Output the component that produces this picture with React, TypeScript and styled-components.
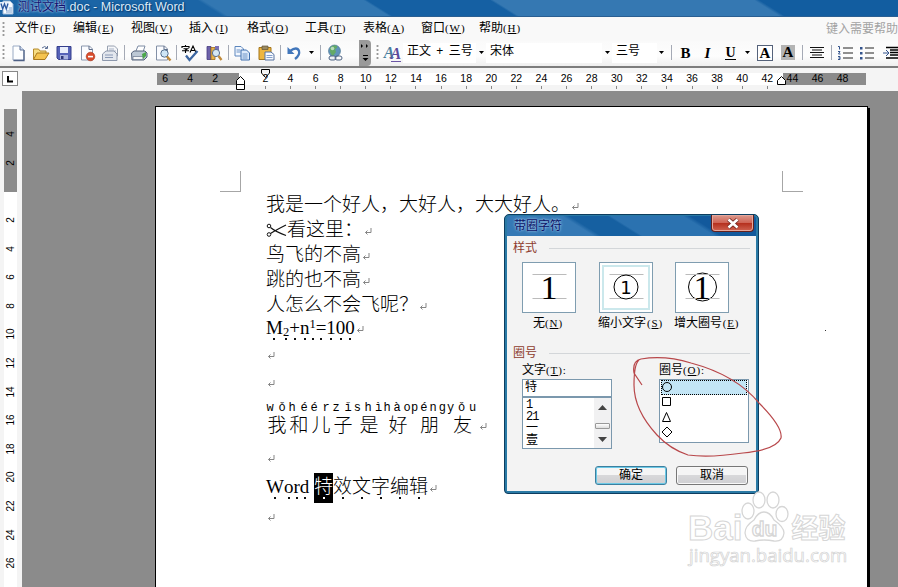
import React from 'react';
import styled, { createGlobalStyle, css } from 'styled-components';

const SANS = '"Liberation Sans", "Noto Sans CJK SC", sans-serif';
const SERIF = '"Liberation Serif", "Noto Sans CJK SC", serif';
const MONO = '"Liberation Mono", "Noto Sans CJK SC", monospace';

const Global = createGlobalStyle`
  *, *::before, *::after { box-sizing: border-box; }
  body { margin: 0; overflow: hidden; background: #f4f4f4; }
`;

const Window = styled.div`
  position: relative;
  width: 898px;
  height: 587px;
  overflow: hidden;
  display: flex;
  flex-direction: column;
  font: 12px/16px ${SANS};
  color: #000;
`;

/* ---------- title bar and menu ---------- */

const TitleBar = styled.header`
  flex: none;
  height: 17px;
  display: flex;
  align-items: center;
  border-bottom: 1px solid #2a5f92;
  background: linear-gradient(32deg, #1b65a6 0 118px, #3277b2 121px 206px, #1560a3 208px 273px, #3578b2 275px 413px, #125da0 416px);
`;

const AppIcon = styled.svg`
  width: 14px;
  height: 17px;
  margin-right: 4px;
`;

const TitleText = styled.span`
  height: 17px;
  line-height: 15px;
  font-size: 12.5px;
  white-space: pre;
  color: #dcebf8;
  text-shadow: 0 0 2px #0b3f77, 1px 1px 1px #0b3f77;
`;

const TitleName = styled.span`
  color: #11116f;
  font-size: 12px;
  text-shadow: 0 0 2px #a9cdec, 0 0 3px #a9cdec;
`;

const MenuBar = styled.nav`
  flex: none;
  height: 24px;
  display: flex;
  align-items: center;
  background: #f9f9f9;
`;

const Grip = styled.div<{ $w: number }>`
  flex: none;
  width: ${p => p.$w}px;
  height: 15px;
  background: radial-gradient(circle at 3.5px 1px, #999 1px, transparent 1.2px) 0 0 / ${p => p.$w}px 4px repeat-y;
`;

const MenuItem = styled.div`
  flex: none;
  width: 58px;
  white-space: nowrap;
  height: 20px;
  line-height: 19px;
`;

const HelpHint = styled.div`
  margin-left: auto;
  flex: none;
  width: 72px;
  white-space: nowrap;
  line-height: 16px;
  color: #a3a3a3;
`;

const Paren = styled.span`
  display: inline-block;
  min-width: 18px;
  text-align: center;
  font: 11px/14px ${SERIF};
  letter-spacing: .9px;
  vertical-align: .5px;
`;

const Key = ({ k, after = '' }: { k: string; after?: string }) => (
  <Paren>(<u>{k}</u>){after}</Paren>
);

/* ---------- toolbar ---------- */

const ToolBar = styled.div`
  flex: none;
  height: 27px;
  display: flex;
  align-items: center;
  padding-bottom: 2px;
  background: linear-gradient(#fafafa, #fdfdfd 60%, #efefef);
  border-bottom: 2px solid #7d7d7d;
`;

const Slot = styled.div<{ $w: number }>`
  flex: none;
  width: ${p => p.$w}px;
  height: 18px;
  display: flex;
  align-items: center;
  justify-content: center;
  svg { flex: none; display: block; }
`;

const Sep = styled.div<{ $w: number }>`
  flex: none;
  width: ${p => p.$w}px;
  height: 15px;
  background: linear-gradient(#a5aab5, #a5aab5) center / 1px 100% no-repeat;
`;

const Field = styled.div<{ $w: number }>`
  flex: none;
  width: ${p => p.$w}px;
  padding-left: 4px;
  white-space: nowrap;
  word-spacing: 2px;
  height: 20px;
  line-height: 17px;
  background: #fff;
`;

const Overflow = styled.div`
  flex: none;
  width: 12px;
  height: 26px;
  margin: 0 3px 0 12px;
  border-radius: 0 4px 4px 0;
  background: #9a9a9a;
`;

const Format = styled.span<{ $kind: 'b' | 'i' | 'u' | 'box' | 'shade' }>`
  font: bold 15px/16px ${SERIF};
  ${p => p.$kind === 'i' && css`font-style: italic;`}
  ${p => p.$kind === 'u' && css`border-bottom: 1px solid #000; line-height: 13px; font-size: 14px;`}
  ${p => p.$kind === 'box' && css`width: 16px; height: 16px; text-align: center; border: 1px solid #55627a; line-height: 14px; background: #fff;`}
  ${p => p.$kind === 'shade' && css`width: 14px; height: 15px; text-align: center; background: #b4b4b4; line-height: 15px;`}
`;

const Caret = ({ w }: { w: number }) => (
  <Slot $w={w}><svg width="5" height="3"><path d="M0 0h5L2.5 3z" /></svg></Slot>
);

const Icon = ({ w, children }: { w: number; children: React.ReactNode }) => (
  <Slot $w={w}><svg width="18" height="18" viewBox="0 0 18 18">{children}</svg></Slot>
);

const NewDoc = () => <><path d="M4 2h7l4 4v10H4z" fill="#fdfeff" stroke="#9aaac4" /><path d="M15 6v10.500H4.500" fill="none" stroke="#4f6186" strokeWidth="1.300" /><path d="M11 2v4h4" fill="#d3def0" stroke="#5f7398" /></>;
const OpenDoc = () => <><path d="M1.500 15V5h5l1.500 2h6v3" fill="#f7dd82" stroke="#b48a2c" /><path d="M1.500 15.500 5 9h12l-4 6.500z" fill="#f5c44f" stroke="#a9791d" /><path d="M10 4q3-3 5 0m.5-2v2.500H13" fill="none" stroke="#5c6f94" /></>;
const SaveDoc = () => <><path d="M2 2.500h14v13H3.500L2 14z" fill="#5663b8" stroke="#353f8c" /><path d="M5 3h8v6H5z" fill="#e9eefb" /><path d="M5 11h8v4.500H5z" fill="#a9b2df" /><path d="M6 12h2.500v3H6z" fill="#2f3879" /></>;
const Restrict = () => <><path d="M3.500 2h8l3 3v11h-11z" fill="#fbfcff" stroke="#8a97ad" /><path d="M11 2v3.500h3.500" fill="none" stroke="#5e6d88" /><circle cx="12.500" cy="12.500" r="4.300" fill="#d84c2c" stroke="#a83216" strokeWidth=".6" /><path d="M10 11.800h5v1.600h-5z" fill="#fff" /></>;
const MailDoc = () => <><path d="M6.500 2h7l3 3v7h-10z" fill="#f6f7fa" stroke="#98a1b0" /><path d="M8 5h5M8 7h7" stroke="#a8b2c4" /><path d="M1.500 10 5 7h8l3 3v6.500H1.500z" fill="#e3e7ee" stroke="#8d98ac" /><path d="M4 11h8M4 13.500h8" stroke="#8b9ab6" /></>;
const Print = () => <><path d="M5.500 8 8 2h7l-2 6z" fill="#fff" stroke="#7d8ba3" /><path d="M1.500 9 4 7h11l2 2v4l-3 3H2z" fill="#bcc8d5" stroke="#56647c" /><path d="M3 12.500h10v3H3z" fill="#f4f6f8" stroke="#68778e" strokeWidth=".7" /><path d="M12 10l4-2v4l-3 3z" fill="#4ba84a" /></>;
const Preview = () => <><path d="M2.500 2h8l3 3v11h-11z" fill="#fbfcff" stroke="#8390a6" /><path d="M10 2v3.500h3.500" fill="none" stroke="#5e6d88" /><circle cx="10.500" cy="9.500" r="3.700" fill="#cfe6f6" stroke="#55708f" /><path d="m13 12.500 3.500 4" stroke="#c08a3a" strokeWidth="2.400" /></>;
const Spell = () => <><path d="M1 4V2.500h7V4M4.500 1v1.500M2.500 4.800h4L4.500 6v3M1 6.700h7M9 8.500 12 2l3 6.500M10 6.500h4" fill="none" stroke="#000" strokeWidth="1.100" /><path d="M5 11.500 8.500 16 16.500 7" fill="none" stroke="#3d67a2" strokeWidth="2.300" /></>;
const Research = () => <><path d="M2 2.500h4v13H2z" fill="#6d62aa" stroke="#463b80" strokeWidth=".8" /><path d="M6 3.500h4v12H6z" fill="#e7b14c" stroke="#9b6d1b" strokeWidth=".8" /><path d="M10 2h4v5h-4z" fill="#7b70b6" /><circle cx="11" cy="9" r="3.600" fill="#d5e8f4" stroke="#596e8d" /><path d="m13.500 12 3 4" stroke="#c08a3a" strokeWidth="2.400" /></>;
const Copy = () => <><path d="M2 2.500h6l2.500 2.500v7H2z" fill="#f3f8ff" stroke="#5c86bd" /><path d="M8 6h5.500L16.500 9v7H8z" fill="#dceafb" stroke="#3f6fae" /><path d="M3.500 6h4M3.500 8h4M9.500 10h5M9.500 12h5M9.500 14h5" stroke="#6c93c6" /></>;
const Paste = () => <><path d="M2 3.500h12v12H2z" fill="#efb63e" stroke="#a4761c" /><path d="M5 2h6v3.500H5z" fill="#9a8a62" stroke="#61553a" strokeWidth=".7" /><path d="M8 8h6l3 2.500V16H8z" fill="#f7faff" stroke="#5673a0" /><path d="M9.500 11.500h6M9.500 13.500h6" stroke="#85a0cb" /></>;
const Undo = () => <><path d="M5 7q7-5 9 0 1.200 4-4 8" fill="none" stroke="#4277bb" strokeWidth="2.300" /><path d="M2.500 3v7h7z" fill="#4277bb" /></>;
const Globe = () => <><circle cx="8.500" cy="7" r="6" fill="#5f93ba" stroke="#476f8d" strokeWidth=".6" /><path d="M4 4q3-4 7-2 1 2-2 3l1 3-3 4Q3 9 4 4z" fill="#63aa67" /><circle cx="6.500" cy="4.500" r="1.800" fill="#cce9cb" opacity=".8" /><rect x="3" y="12" width="7" height="4" rx="2" fill="#eef2f7" stroke="#4f6484" /><rect x="9" y="12" width="7" height="4" rx="2" fill="none" stroke="#4f6484" /></>;
const Align = () => <path d="M2 3.500h14M4 6h10M2 8.500h14M4 11h10M2 13.500h14" stroke="#111" strokeWidth="1.200" />;
const Numbers = () => <><path d="M7 4h10M7 9h10M7 14h10" stroke="#222" /><path d="M2 2.500h1.500V5.500M2 7.500h2L2.500 10H4.500M2 12.500h2v3H2M2.500 14H4" fill="none" stroke="#34548d" /></>;
const Bullets = () => <><path d="M7 4h9M7 9h9M7 14h9" stroke="#222" /><path d="M2 3h2.500v2.500H2zM2 8h2.500v2.500H2zM2 13h2.500v2.500H2z" fill="#34548d" /></>;
const Indent = () => <><path d="M5 3.500h13M9 6h9M9 8.500h9M9 11h9M5 14h13" stroke="#000" strokeWidth="1.500" /><path d="M2 9h6M5 6l3 3-3 3" fill="none" stroke="#34548d" /></>;

const StyleMark = styled.span<{ $c: string }>`
  font: italic bold 16px/16px ${SERIF};
  letter-spacing: -4px;
  color: ${p => p.$c};
  &:last-child { line-height: 15px; padding: 2px 4px 0 0; border-bottom: 1px solid #6b55a5; }
`;

/* ---------- rulers ---------- */

const HRuler = styled.div`
  flex: none;
  position: relative;
  height: 23px;
  display: flex;
  padding: 4px 0 0 152.500px;
  background:
    linear-gradient(90deg, transparent 157px, #8b8b8b 157px 239px, #fff 239px 783px, #8b8b8b 783px 866px, transparent 866px) 0 5px / 100% 12px no-repeat,
    #f4f4f4;
`;

const Tick = styled.div<{ $mark: boolean }>`
  flex: none;
  width: 25.100px;
  height: 19px;
  text-align: center;
  font: 10.500px/13px ${SANS};
  background: ${p => (p.$mark ? 'linear-gradient(#888, #888) 50% 14px / 1px 3px no-repeat' : 'none')};
`;

const TabBox = styled.svg`
  position: absolute;
  left: 2px;
  top: 3px;
`;

const IndentMark = styled.svg<{ $x: number; $y: number }>`
  position: absolute;
  left: ${p => p.$x}px;
  top: ${p => p.$y}px;
`;

const Workspace = styled.main`
  flex: 1;
  min-height: 0;
  display: flex;
  background: #8b8b8b;
`;

const VRuler = styled.div`
  flex: none;
  width: 22px;
  padding: 29px 0 0 4px;
  overflow: hidden;
  background:
    linear-gradient(#f4f4f4 18px, #8b8b8b 18px 101px, #fff 101px) 4px 0 / 13px 100% no-repeat,
    #f4f4f4;
`;

const VTick = styled.div`
  width: 13px;
  height: 28.600px;
  display: flex;
  align-items: center;
  justify-content: center;
  font: 10px/12px ${SANS};
  span { transform: rotate(-90deg); }
`;

/* ---------- document page ---------- */

const Page = styled.article`
  position: relative;
  flex: none;
  width: 713px;
  margin: 15px 0 0 133px;
  padding: 64px 0 0 64px;
  border: 1px solid #000;
  border-bottom: 0;
  background: #fff;
  box-shadow: 2px 2px 0 #000;
`;

const Margins = styled.div`
  display: flex;
  justify-content: space-between;
  width: 583px;
  height: 21px;
  &::before, &::after {
    content: '';
    width: 21px;
    height: 21px;
    border: solid #a6a6a6;
    border-width: 0 1px 1px 0;
  }
  &::after { border-width: 0 0 1px 1px; }
`;

const Line = styled.p<{ $h: number }>`
  margin: 0 0 0 46px;
  height: ${p => p.$h}px;
  display: flex;
  align-items: center;
  white-space: pre;
  font: 300 19px/24px ${SERIF};
  color: #000;
`;

const ReturnMark = styled.svg<{ $drop: number }>`
  flex: none;
  margin: ${p => p.$drop}px 0 0 1px;
`;

const Return = ({ drop = 4 }: { drop?: number }) => (
  <ReturnMark $drop={drop} width="8" height="8"><path d="M7 0v4.500H1.500M3.500 2.500l-2 2 2 2" fill="none" stroke="#858585" /></ReturnMark>
);

const Dotted = styled.span<{ $shift?: 'sub' | 'sup'; $selected?: boolean }>`
  position: relative;
  flex: none;
  ${p => p.$shift && css`font-size: 12.500px; top: ${p.$shift === 'sub' ? 4 : -4}px;`}
  ${p => p.$selected && css`background: #000; color: #fff; padding: 2px 0 4px; margin-top: 2px;`}
  &::after {
    content: '';
    position: absolute;
    left: calc(50% - 1px);
    bottom: ${p => (p.$shift === 'sub' ? 4 : p.$shift === 'sup' ? -4 : p.$selected ? 4 : 0)}px;
    width: 2px;
    height: 2px;
    background: ${p => (p.$selected ? '#fff' : '#111')};
  }
`;

const RubyCell = styled.span<{ $w: number }>`
  flex: none;
  width: ${p => p.$w}px;
  padding-top: 3px;
  display: flex;
  flex-direction: column;
  align-items: center;
  line-height: 20px;
`;

const Pinyin = styled.span`
  align-self: stretch;
  display: flex;
  justify-content: space-around;
  margin-left: -2px;
  font: 12px/15px ${MONO};
  color: #000;
`;

const ruby: [string, string, number][] = [
  ['wǒ', '我', 22], ['hé', '和', 22], ['ér', '儿', 22], ['zǐ', '子', 22],
  ['shì', '是', 30], ['hào', '好', 28], ['péng', '朋', 35], ['yǒu', '友', 31],
];

const StrayDot = styled.i`
  position: absolute;
  left: 669px;
  top: 223px;
  width: 1px;
  height: 1px;
  background: #333;
`;

/* ---------- dialog ---------- */

const Dialog = styled.section`
  position: absolute;
  left: 504px;
  top: 214px;
  width: 255px;
  height: 280px;
  border: 1px solid #0d3d5f;
  border-radius: 5px 5px 4px 4px;
  background: #2a7aa5;
  padding: 1px 2px 2px;
  display: flex;
  flex-direction: column;
`;

const DialogTitle = styled.div`
  flex: none;
  height: 20px;
  display: flex;
  align-items: flex-start;
  justify-content: space-between;
  padding: 0 2px 0 7px;
  border-radius: 3px 3px 0 0;
  background: linear-gradient(32deg, #3579b5 0 46px, #1660a1 50px 70px, #2b72b0 72px 110px, #12599c 114px);
  span { line-height: 20px; color: #0b1266; text-shadow: 0 0 2px #9fc6e8, 0 0 3px #9fc6e8; }
`;

const Close = styled.button`
  width: 43px;
  height: 17px;
  margin-top: -1px;
  padding: 0;
  display: grid;
  place-items: center;
  border: 1px solid #64201c;
  border-top: 0;
  border-radius: 0 0 4px 4px;
  background: linear-gradient(#dc9a8e, #cf6455 48%, #b5301e 52%, #cf6351);
  box-shadow: inset 0 0 0 1px #e4a79c;
`;

const DialogBody = styled.div`
  flex: 1;
  min-height: 0;
  background: #f3f3f3;
  padding: 4px 6px 0;
`;

const Legend = styled.div`
  flex: 1;
  height: 16px;
  display: flex;
  align-items: center;
  gap: 12px;
  color: #8e3c2e;
  &::after { content: ''; flex: 1; height: 1px; background: #d3d6d9; }
`;

const Row = styled.div<{ $top: number; $left: number }>`
  display: flex;
  margin: ${p => p.$top}px 0 0 ${p => p.$left}px;
`;

const StyleChoice = styled.div<{ $w: number; $pad?: number }>`
  flex: none;
  width: ${p => p.$w}px;
  white-space: nowrap;
  label { display: block; height: 16px; margin: 2px 0 0 ${p => p.$pad ?? -1}px; }
`;

const Tile = styled.div<{ $active?: boolean }>`
  width: 54px;
  height: 51px;
  border: 1px solid #7f9db0;
  background: #fff;
  box-shadow: ${p => (p.$active ? 'inset 0 0 0 2px #fff, inset 0 0 0 4px #cbe8ec' : 'none')};
  svg { display: block; }
`;

const Numeral = styled.text<{ $sans?: boolean }>`
  font: ${p => (p.$sans ? '18px "DejaVu Sans", sans-serif' : '34px "Liberation Serif", serif')};
  text-anchor: middle;
`;

const Group = styled.div<{ $gap: number }>`
  flex: none;
  width: 90px;
  margin-right: ${p => p.$gap}px;
  label { display: block; height: 16px; }
`;

const Input = styled.div`
  height: 18px;
  margin-top: 1px;
  border: 1px solid #7b98ad;
  background: #fff;
  padding-left: 2px;
  line-height: 15px;
`;

const List = styled.div<{ $h: number; $top?: number }>`
  height: ${p => p.$h}px;
  margin-top: ${p => p.$top ?? 0}px;
  display: flex;
  border: 1px solid #7b98ad;
  background: #fff;
`;

const TextItems = styled.div`
  flex: 1;
  padding: 1px 0 0 3px;
  font: 12px/12px ${MONO};
  div { height: 12px; letter-spacing: -1px; }
`;

const Scroll = styled.div`
  width: 17px;
  background: #f1f1f2;
  display: flex;
  flex-direction: column;
  align-items: center;
  justify-content: space-between;
  padding: 7px 0 6px;
`;

const Thumb = styled.div`
  width: 15px;
  height: 6px;
  margin-top: 5px;
  border: 1px solid #999;
  border-radius: 1px;
  background: linear-gradient(#fff, #ddd);
`;

const ShapeItems = styled.div`
  flex: 1;
  padding: 0 1px;
`;

const ShapeItem = styled.div<{ $on?: boolean }>`
  height: 15px;
  border: 1px dotted ${p => (p.$on ? '#000' : 'transparent')};
  background: ${p => (p.$on ? '#c3e5f5' : 'transparent')};
  svg { display: block; }
`;

const Button = styled.button<{ $primary?: boolean }>`
  flex: none;
  width: 72px;
  height: 19px;
  margin-right: 9px;
  padding: 0;
  font: 12px/15px ${SANS};
  color: #000;
  border: 1px solid ${p => (p.$primary ? '#3c7f9f' : '#777')};
  border-radius: 3px;
  box-shadow: inset 0 0 0 1px ${p => (p.$primary ? '#6cc9e6' : '#f8f8f8')};
  background: linear-gradient(#f5f5f5 45%, #d8d8da 50%, #cfcfd2);
`;

/* ---------- overlays ---------- */

const Scribble = styled.svg`
  position: absolute;
  left: 625px;
  top: 350px;
`;

const Watermark = styled.div`
  position: absolute;
  left: 688px;
  top: 490px;
  width: 170px;
  font-family: "Open Sans", "Noto Sans", sans-serif;
  color: #fff;
  -webkit-text-stroke: 1px #d6d6d6;
`;

const Brand = styled.div`
  height: 55px;
  display: flex;
  align-items: flex-end;
  font: bold 35px/34px "Liberation Sans", "Noto Sans CJK SC", sans-serif;
  white-space: nowrap;
  svg { display: block; margin: 0 2px 2px -1px; }
`;

const BrandCn = styled.span`
  font-size: 27px;
  line-height: 32px;
`;

const Du = styled.text`
  font: bold 21px "Liberation Sans", sans-serif;
  text-anchor: middle;
`;

const Site = styled.div`
  font-size: 18.600px;
  line-height: 20px;
  margin-left: 1px;
  -webkit-text-stroke: .7px #d2d2d2;
`;

const menus: [string, string][] = [
  ['文件', 'F'], ['编辑', 'E'], ['视图', 'V'], ['插入', 'I'], ['格式', 'O'],
  ['工具', 'T'], ['表格', 'A'], ['窗口', 'W'], ['帮助', 'H'],
];

const hLabels = Array.from({ length: 28 }, (_, i) => (i === 3 ? '' : String(Math.abs(i - 3) * 2)));
const vLabels = Array.from({ length: 16 }, (_, i) => (i === 2 ? '' : String(Math.abs(i - 2) * 2)));

const Guides = () => <path d="M9.500 11.500h34M9.500 35.500h34" stroke="#bbb" />;

export default function App() {
  return (
    <Window>
      <Global />
      <TitleBar>
        <AppIcon viewBox="0 0 14 17">
          <path d="M3 1h7l3 3v10H3z" fill="#f7fbff" stroke="#9db9d8" />
          <path d="M6 8h6M6 10h6M6 12h6" stroke="#7da0cc" />
          <path d="M0 2h9v8H0z" fill="#e9f1fb" />
          <path d="M1 3.500 2.700 9 4.500 4l1.800 5L8 3.500" fill="none" stroke="#2a57a0" strokeWidth="1.300" />
        </AppIcon>
        <TitleText><TitleName>测试文档</TitleName>.doc - Microsoft Word</TitleText>
      </TitleBar>

      <MenuBar>
        <Grip $w={15} />
        {menus.map(([name, key]) => <MenuItem key={key}>{name}<Key k={key} /></MenuItem>)}
        <HelpHint>键入需要帮助</HelpHint>
      </MenuBar>

      <ToolBar>
        <Grip $w={6} />
        <Icon w={23}><NewDoc /></Icon>
        <Icon w={23}><OpenDoc /></Icon>
        <Icon w={23}><SaveDoc /></Icon>
        <Icon w={23}><Restrict /></Icon>
        <Icon w={23}><MailDoc /></Icon>
        <Sep $w={6} />
        <Icon w={24}><Print /></Icon>
        <Icon w={23}><Preview /></Icon>
        <Sep $w={4} />
        <Icon w={24}><Spell /></Icon>
        <Icon w={24}><Research /></Icon>
        <Sep $w={4} />
        <Icon w={24}><Copy /></Icon>
        <Icon w={24}><Paste /></Icon>
        <Sep $w={4} />
        <Icon w={24}><Undo /></Icon>
        <Caret w={11} />
        <Sep $w={6} />
        <Icon w={24}><Globe /></Icon>
        <Overflow>
          <svg width="12" height="26"><path d="M2 4l2 2-2 2zM7 4l2 2-2 2zM4 15h5v1H4zM3.500 18h6l-3 3z" /></svg>
        </Overflow>
        <Grip $w={8} />
        <Slot $w={21}><StyleMark $c="#4b7f9e">A</StyleMark><StyleMark $c="#5b4a9c">A</StyleMark></Slot>
        <Field $w={73}>正文 + 三号</Field>
        <Caret w={10} />
        <Field $w={116}>宋体</Field>
        <Caret w={10} />
        <Field $w={45}>三号</Field>
        <Caret w={9} />
        <Sep $w={11} />
        <Slot $w={17}><Format $kind="b">B</Format></Slot>
        <Slot $w={27}><Format $kind="i">I</Format></Slot>
        <Slot $w={19}><Format $kind="u">U</Format></Slot>
        <Caret w={14} />
        <Slot $w={22}><Format $kind="box">A</Format></Slot>
        <Slot $w={24}><Format $kind="shade">A</Format></Slot>
        <Sep $w={5} />
        <Icon w={24}><Align /></Icon>
        <Sep $w={5} />
        <Icon w={22}><Numbers /></Icon>
        <Icon w={22}><Bullets /></Icon>
        <Icon w={24}><Indent /></Icon>
      </ToolBar>

      <HRuler>
        <TabBox width="16" height="15"><rect x=".5" y=".5" width="15" height="14" fill="#fff" stroke="#888" /><path d="M6 5v5.500h5" fill="none" stroke="#000" strokeWidth="2" /></TabBox>
        {hLabels.map((t, i) => <Tick key={i} $mark={i > 3 && i < 25}>{t}</Tick>)}
        <IndentMark $x={235} $y={8} width="11" height="15"><path d="M1.500 8.500v-4l4-4 4 4v4zM1.500 8.500h8v5h-8z" fill="#fff" stroke="#000" /></IndentMark>
        <IndentMark $x={260} $y={1} width="11" height="10"><path d="M1.500 .5h8v3.500l-4 4.500-4-4.500z" fill="none" stroke="#000" /></IndentMark>
        <IndentMark $x={776} $y={8} width="11" height="10"><path d="M1.500 8.500v-4l4-4 4 4v4z" fill="#fff" stroke="#000" /></IndentMark>
      </HRuler>

      <Workspace>
        <VRuler>{vLabels.map((t, i) => <VTick key={i}><span>{t}</span></VTick>)}</VRuler>
        <Page>
          <Margins />
          <Line $h={25}>我是一个好人，大好人，大大好人。<Return /></Line>
          <Line $h={25}>
            <svg width="21" height="16" viewBox="0 0 21 16" fill="none" stroke="#111"><circle cx="3" cy="4" r="1.800" /><circle cx="3" cy="12.500" r="1.800" /><path d="M4.500 5.500Q10 10 20 13.500M4.500 11.500Q10 8 20 3" strokeWidth="1.200" /></svg>
            <span>看这里：</span><Return />
          </Line>
          <Line $h={25}>鸟飞的不高<Return /></Line>
          <Line $h={25}>跳的也不高<Return /></Line>
          <Line $h={25}>人怎么不会飞呢？<Return /></Line>
          <Line $h={22}>
            <Dotted>M</Dotted><Dotted $shift="sub">2</Dotted><Dotted>+</Dotted><Dotted>n</Dotted><Dotted $shift="sup">1</Dotted>
            <Dotted>=</Dotted><Dotted>1</Dotted><Dotted>0</Dotted><Dotted>0</Dotted><Return />
          </Line>
          <Line $h={29}><Return /></Line>
          <Line $h={28}><Return /></Line>
          <Line $h={41}>
            {ruby.map(([py, ch, w]) => (
              <RubyCell key={ch} $w={w}><Pinyin>{[...py].map((c, i) => <span key={i}>{c}</span>)}</Pinyin>{ch}</RubyCell>
            ))}
            <Return drop={20} />
          </Line>
          <Line $h={40}><Return /></Line>
          <Line $h={20}>
            <Dotted>W</Dotted><Dotted>o</Dotted><Dotted>r</Dotted><Dotted>d</Dotted><span> </span>
            <Dotted $selected>特</Dotted>
            {[...'效文字编辑'].map(c => <Dotted key={c}>{c}</Dotted>)}<Return />
          </Line>
          <Line $h={38}><Return /></Line>
          <StrayDot />
        </Page>
      </Workspace>

      <Dialog>
        <DialogTitle>
          <span>带圈字符</span>
          <Close><svg width="14" height="11" viewBox="0 0 14 11"><path d="M2.500 1.500l9 8M11.500 1.500l-9 8" stroke="#6e2620" strokeWidth="4.200" /><path d="M2.500 1.500l9 8M11.500 1.500l-9 8" stroke="#fff" strokeWidth="2.600" /></svg></Close>
        </DialogTitle>
        <DialogBody>
          <Row $top={0} $left={0}><Legend>样式</Legend></Row>
          <Row $top={6} $left={9}>
            <StyleChoice $w={77} $pad={11}>
              <Tile><svg width="52" height="49"><Guides /><Numeral x="26" y="35.500">1</Numeral></svg></Tile>
              <label>无<Key k="N" /></label>
            </StyleChoice>
            <StyleChoice $w={76}>
              <Tile $active><svg width="52" height="49"><Guides /><circle cx="26" cy="24" r="12" fill="#fff" stroke="#000" /><Numeral $sans x="26" y="30.500">1</Numeral></svg></Tile>
              <label>缩小文字<Key k="S" /></label>
            </StyleChoice>
            <StyleChoice $w={54}>
              <Tile><svg width="52" height="49"><circle cx="26.500" cy="24" r="14" fill="#fff" stroke="#000" /><Guides /><Numeral x="26" y="35.500">1</Numeral></svg></Tile>
              <label>增大圈号<Key k="E" /></label>
            </StyleChoice>
          </Row>
          <Row $top={14} $left={0}><Legend>圈号</Legend></Row>
          <Row $top={1} $left={9}>
            <Group $gap={47}>
              <label>文字<Key k="T" after=":" /></label>
              <Input>特</Input>
              <List $h={52}>
                <TextItems><div>1</div><div>21</div><div>一</div><div>壹</div></TextItems>
                <Scroll>
                  <svg width="9" height="5"><path d="M0 5h9L4.500 0z" fill="#444" /></svg>
                  <Thumb />
                  <svg width="9" height="5"><path d="M0 0h9L4.500 5z" fill="#444" /></svg>
                </Scroll>
              </List>
            </Group>
            <Group $gap={0}>
              <label>圈号<Key k="O" after=":" /></label>
              <List $h={64} $top={1}>
                <ShapeItems>
                  <ShapeItem $on><svg width="12" height="13"><circle cx="5" cy="6" r="4.500" fill="none" stroke="#000" /></svg></ShapeItem>
                  <ShapeItem><svg width="12" height="13"><path d="M.5 1.500h8v8h-8z" fill="none" stroke="#000" /></svg></ShapeItem>
                  <ShapeItem><svg width="12" height="13"><path d="M.5 10.500h8L4.500 1.500z" fill="none" stroke="#000" /></svg></ShapeItem>
                  <ShapeItem><svg width="12" height="13"><path d="M5 1l5 5-5 5-5-5z" fill="none" stroke="#000" /></svg></ShapeItem>
                </ShapeItems>
              </List>
            </Group>
          </Row>
          <Row $top={17} $left={82}>
            <Button $primary>确定</Button>
            <Button>取消</Button>
          </Row>
        </DialogBody>
      </Dialog>

      <Watermark>
        <Brand>
          <span>Bai</span>
          <svg width="48" height="53" viewBox="0 0 48 53" fill="#fff" stroke="#d6d6d6" strokeWidth="1.300">
            <ellipse cx="7" cy="21" rx="6" ry="8" /><ellipse cx="18" cy="10" rx="6" ry="8" />
            <ellipse cx="32" cy="10" rx="6" ry="8" /><ellipse cx="41" cy="24" rx="6" ry="7.500" />
            <path d="M23 22q6 0 10 8 10 7 10 13-1 9-10 8-10-2-19 0-9 1-10-8 0-7 9-13 4-8 10-8z" />
            <Du x="23.500" y="46">du</Du>
          </svg>
          <BrandCn>经验</BrandCn>
        </Brand>
        <Site>jingyan.baidu.com</Site>
      </Watermark>

      <Scribble width="170" height="112">
        <path d="M17 35 9 23Q7 11 16 9q24-4 50 4 45 12 68 40 24 24 22 35-5 12-38 15-34 5-55 2-18-6-31-20Q9 60 9 35 9 14 14 10" fill="none" stroke="#b8474a" strokeWidth="1.200" />
      </Scribble>
    </Window>
  );
}
